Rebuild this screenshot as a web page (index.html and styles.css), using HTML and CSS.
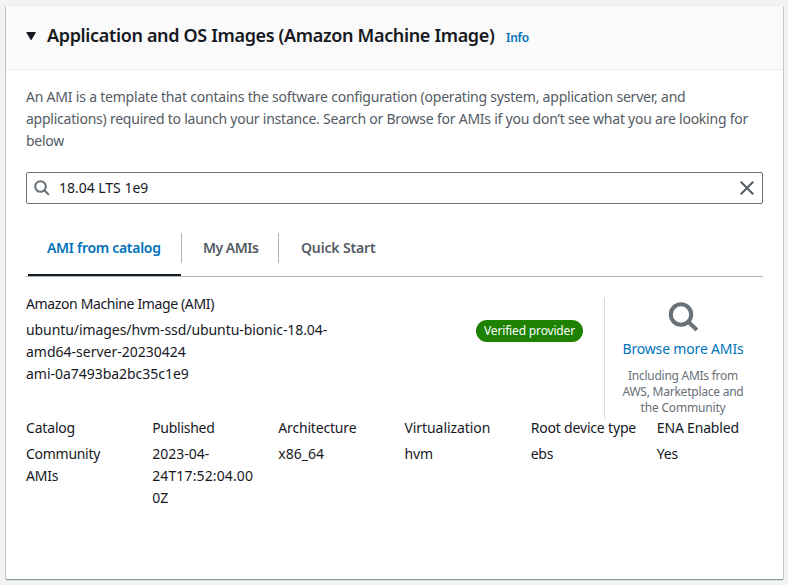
FILE: index.html
```html
<!DOCTYPE html>
<html lang="en">
<head>
<meta charset="utf-8">
<title>Application and OS Images</title>
<link rel="stylesheet" href="styles.css">
</head>
<body>
<section class="card">
  <header class="card-header">
    <svg class="caret" width="10" height="9" viewBox="0 0 10 9"><path d="M0.8 0.5h8.6L5.1 7.7z" fill="#16191f" stroke="#16191f" stroke-linejoin="round"/></svg>
    <h2 class="title">Application and OS Images (Amazon Machine Image)</h2>
    <a class="info">Info</a>
  </header>
  <div class="card-body">
    <p class="description"><span class="desc-1">An AMI is a template that contains the software configuration (operating system, application server, and</span><br><span class="desc-2">applications) required to launch your instance. Search or Browse for AMIs if you don’t see what you are looking for</span><br>below</p>
    <div class="search">
      <svg width="16" height="16" viewBox="0 0 16 16" fill="none" stroke="#687078" stroke-width="2"><circle cx="6.5" cy="6.5" r="5.3"/><path d="M10.3 10.3l4.6 4.6"/></svg>
      <span class="query">18.04 LTS 1e9</span>
      <svg width="14" height="14" viewBox="0 0 14 14" fill="none" stroke="#545b64" stroke-width="2"><path d="M0.8 0.8l12.4 12.4M13.2 0.8L0.8 13.2"/></svg>
    </div>
    <nav class="tabs">
      <a class="tab active"><span class="t-catalog">AMI from catalog</span></a>
      <a class="tab"><span class="t-my">My AMIs</span></a>
      <a class="tab"><span class="t-quick">Quick Start</span></a>
    </nav>
    <div class="ami">
      <div class="ami-main">
        <div class="label l-ami">Amazon Machine Image (AMI)</div>
        <div class="l-name">ubuntu/images/hvm-ssd/ubuntu-bionic-18.04-</div>
        <div class="l-plain">amd64-server-20230424</div>
        <div class="l-id">ami-0a7493ba2bc35c1e9</div>
      </div>
      <span class="badge">Verified provider</span>
      <div class="browse">
        <svg width="31" height="30" viewBox="0 0 31 30" fill="none" stroke="#687078" stroke-width="4"><circle cx="13" cy="12.5" r="10.2"/><path d="M20.3 19.7l8.6 8.3"/></svg>
        <a class="browse-link">Browse more AMIs</a>
        <p class="browse-note"><span class="n-1">Including AMIs from</span><br>AWS, Marketplace and<br><span class="n-3">the Community</span></p>
      </div>
    </div>
    <div class="facts">
      <div><div class="label ls-18">Catalog</div><div class="ls-28">Community</div><div class="ls-18">AMIs</div></div>
      <div><div class="label ls-28">Published</div><div>2023-04-</div><div class="ls-wide">24T17:52:04.00</div><div>0Z</div></div>
      <div><div class="label ls-18">Architecture</div><div class="l-plain">x86_64</div></div>
      <div><div class="label l-name">Virtualization</div><div class="ls-18">hvm</div></div>
      <div><div class="label ls-18">Root device type</div><div class="ls-18">ebs</div></div>
      <div><div class="label ls-18">ENA Enabled</div><div class="ls-18">Yes</div></div>
    </div>
  </div>
</section>
</body>
</html>
```
FILE: styles.css
```css
* { box-sizing: border-box; }
body {
  margin: 0;
  padding: 6px 5px 6px 6px;
  height: 585px;
  overflow: hidden;
  background: #f2f3f3;
  color: #16191f;
  font: 14px/22px "Noto Sans", "Open Sans", sans-serif;
}
h2, p { margin: 0; }
svg { display: block; flex: none; }
.card {
  height: 573px;
  background: #fff;
  box-shadow: 0 -1px 0 #eaeded, 0 1px 1px #879596, 1px 0 0 #cbd0d0, -1px 0 0 #cbd0d0;
}
.card-header {
  display: flex;
  align-items: center;
  height: 64px;
  padding: 0 20px 4px;
  background: #fafafa;
  border-bottom: 1px solid #eaeded;
}
.caret { margin: 2px 11px 0 0; }
.title {
  width: 459px;
  padding-bottom: 1px;
  white-space: nowrap;
  font-size: 18px;
  font-weight: 600;
  letter-spacing: -0.345px;
}
.info {
  padding-top: 5px;
  color: #0073bb;
  font-size: 12px;
  font-weight: 600;
  letter-spacing: -0.3px;
}
.card-body { padding: 16px 20px 0; }
.description { color: #545b64; white-space: nowrap; letter-spacing: -0.26px; }
.desc-1 { letter-spacing: -0.21px; }
.desc-2 { letter-spacing: -0.235px; }
.search {
  display: flex;
  align-items: center;
  height: 32px;
  margin-top: 20px;
  padding: 0 8px 0 7px;
  border: 1px solid #687078;
  border-radius: 2px;
}
.query { flex: 1; padding-left: 9px; letter-spacing: -0.02px; }
.tabs {
  display: flex;
  height: 73px;
  padding: 29px 0 0 2px;
  border-bottom: 1px solid #aab7b8;
}
.tab {
  position: relative;
  width: 97px;
  padding: 4px 0 0 21px;
  color: #545b64;
  font-weight: 600;
  white-space: nowrap;
}
.tab:first-child { width: 154px; padding-left: 19px; }
.tab:last-child { padding-left: 22px; }
.tab:not(:last-child)::after {
  content: "";
  position: absolute;
  top: 0;
  right: 0;
  width: 1px;
  height: 30px;
  background: #aab7b8;
}
.tab.active { color: #0073bb; }
.active::before {
  content: "";
  position: absolute;
  left: 0;
  right: 1px;
  bottom: 0;
  height: 2px;
  background: #16191f;
}
.t-catalog { letter-spacing: -0.3px; }
.t-my { letter-spacing: -0.5px; }
.t-quick { letter-spacing: -0.15px; }
.ami { display: flex; height: 121px; margin-top: 21px; }
.ami-main { width: 450px; margin-top: -5px; white-space: nowrap; }
.label { margin-bottom: 4px; }
.l-ami { letter-spacing: -0.369px; }
.l-name { letter-spacing: -0.075px; }
.l-id { letter-spacing: -0.03px; }
.badge {
  width: 107px;
  height: 22px;
  margin: 22px 21px 0 0;
  border-radius: 11px;
  background: #1d8102;
  color: #fff;
  font-size: 12px;
  text-align: center;
  letter-spacing: -0.158px;
  white-space: nowrap;
}
.browse {
  display: flex;
  flex-direction: column;
  align-items: center;
  width: 159px;
  padding: 4px 2px 0 0;
  border-left: 1px solid #d5dbdb;
  white-space: nowrap;
}
.browse-link { margin-top: 6px; color: #0073bb; letter-spacing: -0.171px; }
.browse-note {
  margin-top: 8px;
  color: #687078;
  font-size: 12px;
  line-height: 16px;
  text-align: center;
  letter-spacing: -0.237px;
}
.n-1 { letter-spacing: -0.262px; }
.n-3 { letter-spacing: -0.178px; }
.facts {
  display: grid;
  grid-template-columns: repeat(6, 1fr);
  width: 757px;
  margin-top: -2px;
  white-space: nowrap;
}
.ls-18 { letter-spacing: -0.18px; }
.ls-28 { letter-spacing: -0.28px; }
.ls-wide { letter-spacing: 0.134px; }
```
